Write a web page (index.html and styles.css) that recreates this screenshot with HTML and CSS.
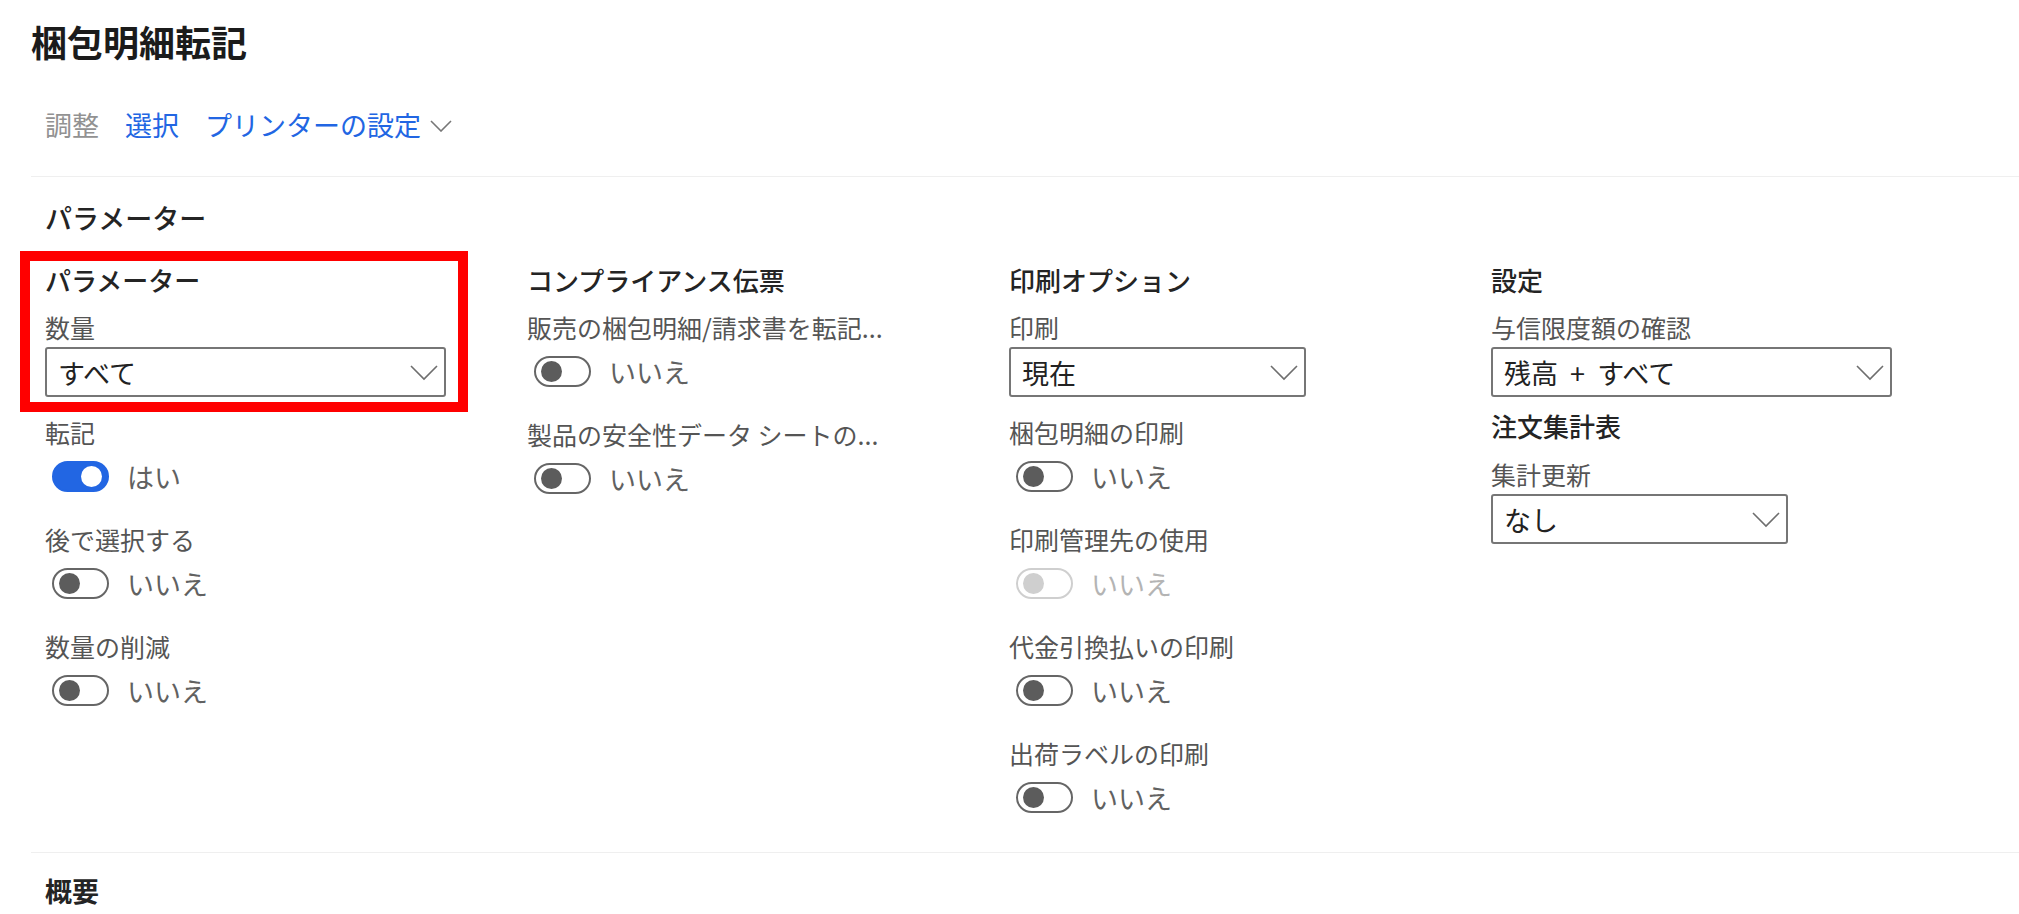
FILE: index.html
```html
<!DOCTYPE html>
<html lang="ja">
<head>
  <meta charset="UTF-8" />
  <meta name="viewport" content="width=device-width, initial-scale=1.0" />
  <title>梱包明細転記</title>
  <link rel="stylesheet" href="styles.css">
</head>
<body>
  <div class="page">
    <h1 class="title">梱包明細転記</h1>

    <div class="toolbar">
      <span class="tool disabled">調整</span>
      <span class="tool">選択</span>
      <span class="tool">プリンターの設定
        <svg class="tool-chevron" width="22" height="12" viewBox="0 0 22 12"><path d="M1 1 L11 11 L21 1" fill="none" stroke="#777" stroke-width="1.6"/></svg>
      </span>
    </div>

    <div class="section">
      <h2 class="section-title">パラメーター</h2>

      <div class="columns">
        <div class="column">
          <div class="highlight"></div>
          <h3 class="group-title">パラメーター</h3>
          <div class="field">
            <div class="label">数量</div>
            <div class="select wide">
              <span>すべて</span>
              <svg class="chevron" width="28" height="16" viewBox="0 0 28 16"><path d="M1 1 L14 14 L27 1" fill="none" stroke="#6e6e6e" stroke-width="1.6"/></svg>
            </div>
          </div>
          <div class="field">
            <div class="label">転記</div>
            <div class="toggle-row"><span class="toggle on"></span><span class="value">はい</span></div>
          </div>
          <div class="field">
            <div class="label">後で選択する</div>
            <div class="toggle-row"><span class="toggle"></span><span class="value">いいえ</span></div>
          </div>
          <div class="field">
            <div class="label">数量の削減</div>
            <div class="toggle-row"><span class="toggle"></span><span class="value">いいえ</span></div>
          </div>
        </div>

        <div class="column">
          <h3 class="group-title">コンプライアンス伝票</h3>
          <div class="field">
            <div class="label">販売の梱包明細/請求書を転記...</div>
            <div class="toggle-row"><span class="toggle"></span><span class="value">いいえ</span></div>
          </div>
          <div class="field">
            <div class="label">製品の安全性データ シートの...</div>
            <div class="toggle-row"><span class="toggle"></span><span class="value">いいえ</span></div>
          </div>
        </div>

        <div class="column">
          <h3 class="group-title">印刷オプション</h3>
          <div class="field">
            <div class="label">印刷</div>
            <div class="select narrow">
              <span>現在</span>
              <svg class="chevron" width="28" height="16" viewBox="0 0 28 16"><path d="M1 1 L14 14 L27 1" fill="none" stroke="#6e6e6e" stroke-width="1.6"/></svg>
            </div>
          </div>
          <div class="field">
            <div class="label">梱包明細の印刷</div>
            <div class="toggle-row"><span class="toggle"></span><span class="value">いいえ</span></div>
          </div>
          <div class="field">
            <div class="label">印刷管理先の使用</div>
            <div class="toggle-row"><span class="toggle off-disabled"></span><span class="value muted">いいえ</span></div>
          </div>
          <div class="field">
            <div class="label">代金引換払いの印刷</div>
            <div class="toggle-row"><span class="toggle"></span><span class="value">いいえ</span></div>
          </div>
          <div class="field">
            <div class="label">出荷ラベルの印刷</div>
            <div class="toggle-row"><span class="toggle"></span><span class="value">いいえ</span></div>
          </div>
        </div>

        <div class="column">
          <h3 class="group-title">設定</h3>
          <div class="field">
            <div class="label">与信限度額の確認</div>
            <div class="select wide">
              <span>残高 &nbsp;+ &nbsp;すべて</span>
              <svg class="chevron" width="28" height="16" viewBox="0 0 28 16"><path d="M1 1 L14 14 L27 1" fill="none" stroke="#6e6e6e" stroke-width="1.6"/></svg>
            </div>
          </div>
          <h3 class="group-title sub">注文集計表</h3>
          <div class="field">
            <div class="label">集計更新</div>
            <div class="select narrow">
              <span>なし</span>
              <svg class="chevron" width="28" height="16" viewBox="0 0 28 16"><path d="M1 1 L14 14 L27 1" fill="none" stroke="#6e6e6e" stroke-width="1.6"/></svg>
            </div>
          </div>
        </div>
      </div>
    </div>

    <div class="section last">
      <h2 class="section-title summary">概要</h2>
    </div>
  </div>
</body>
</html>
```

FILE: styles.css
```css
body {
  margin: 0;
  background-color: #fff;
  color: #242424;
  font-family: "Noto Sans CJK JP", "Noto Sans", sans-serif;
  overflow: hidden;
}

.page {
  padding: 17px 0 0 31px;
}

.title {
  margin: 0;
  font-size: 36px;
  line-height: 48px;
  font-weight: 700;
  color: #1b1b1b;
}

.toolbar {
  display: flex;
  align-items: center;
  gap: 26px;
  margin-top: 42px;
  padding-left: 14px;
  font-size: 27px;
  line-height: 36px;
}

.tool {
  display: flex;
  align-items: center;
  color: #2266e3;
}

.tool.disabled {
  color: #929292;
}

.tool-chevron {
  margin-left: 9px;
  margin-top: 2px;
}

.section {
  border-top: 1px solid #efefef;
  margin-top: 33px;
  padding-left: 14px;
}

.section.last {
  margin-top: 8px;
}

.section-title {
  margin: 0;
  padding-top: 23px;
  font-size: 27px;
  line-height: 36px;
  font-weight: 500;
  color: #242424;
}

.section-title.summary {
  padding-top: 20px;
  font-weight: 700;
}

.columns {
  display: grid;
  grid-template-columns: repeat(4, 402px);
  column-gap: 80px;
  margin-top: 28px;
}

.column {
  position: relative;
}

.highlight {
  position: absolute;
  left: -25px;
  top: -13px;
  width: 448px;
  height: 161px;
  border: 10px solid #ff0000;
  box-sizing: border-box;
}

.group-title {
  margin: 0 0 15px;
  font-size: 26px;
  line-height: 32px;
  font-weight: 500;
  color: #242424;
}

.group-title.sub {
  margin-top: -6px;
  margin-bottom: 16px;
}

.field {
  margin-bottom: 19px;
}

.label {
  font-size: 25px;
  line-height: 32px;
  color: #555;
  white-space: nowrap;
}

.select {
  display: flex;
  align-items: center;
  justify-content: space-between;
  height: 50px;
  margin-top: 4px;
  padding: 0 6px 0 11px;
  border: 2px solid #767676;
  border-radius: 3px;
  box-sizing: border-box;
  font-size: 27px;
  color: #222;
}

.select.wide {
  width: 401px;
}

.select.narrow {
  width: 297px;
}

.chevron {
  margin-top: 2px;
}

.toggle-row {
  display: flex;
  align-items: center;
  height: 56px;
  padding-left: 7px;
}

.toggle {
  position: relative;
  width: 57px;
  height: 31px;
  border: 2px solid #666;
  border-radius: 16px;
  box-sizing: border-box;
}

.toggle::after {
  content: "";
  position: absolute;
  left: 5px;
  top: 3px;
  width: 21px;
  height: 21px;
  border-radius: 50%;
  background-color: #5c5c5c;
}

.toggle.on {
  background-color: #2266e3;
  border-color: #2266e3;
}

.toggle.on::after {
  left: auto;
  right: 5px;
  background-color: #fff;
}

.toggle.off-disabled {
  border-color: #cfcfcf;
}

.toggle.off-disabled::after {
  background-color: #cfcfcf;
}

.value {
  margin-left: 18px;
  font-size: 27px;
  color: #616161;
}

.value.muted {
  color: #b4b4b4;
}
```
